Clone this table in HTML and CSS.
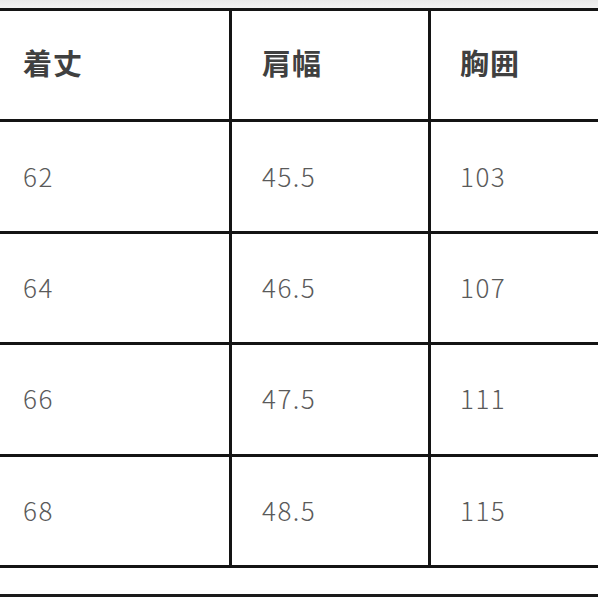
FILE: index.html
```html
<!DOCTYPE html>
<html lang="ja">
<head>
<meta charset="utf-8">
<title>サイズ表</title>
<link rel="stylesheet" href="styles.css">
</head>
<body>
<div class="top-band"></div>
<div class="size-table">
  <div class="row head">
    <div class="cell c1">着丈</div>
    <div class="cell c2">肩幅</div>
    <div class="cell c3">胸囲</div>
  </div>
  <div class="row">
    <div class="cell c1">62</div>
    <div class="cell c2">45.5</div>
    <div class="cell c3">103</div>
  </div>
  <div class="row">
    <div class="cell c1">64</div>
    <div class="cell c2">46.5</div>
    <div class="cell c3">107</div>
  </div>
  <div class="row">
    <div class="cell c1">66</div>
    <div class="cell c2">47.5</div>
    <div class="cell c3">111</div>
  </div>
  <div class="row">
    <div class="cell c1">68</div>
    <div class="cell c2">48.5</div>
    <div class="cell c3">115</div>
  </div>
</div>
<div class="gap"></div>
<div class="next-line"></div>
</body>
</html>
```
FILE: styles.css
```css
html, body {
  margin: 0;
  padding: 0;
  background: #ffffff;
  overflow: hidden;
}
body {
  width: 598px;
  height: 598px;
  font-family: "Noto Sans CJK JP", "Noto Sans", sans-serif;
}
.top-band {
  height: 8px;
  background: linear-gradient(#e9e9e9, #f3f3f3);
}
.size-table {
  border-top: 3px solid #141414;
}
.row {
  display: grid;
  grid-template-columns: 232px 199px 1fr;
  height: 111.4px;
  box-sizing: border-box;
  border-bottom: 3px solid #141414;
}
.cell {
  display: flex;
  align-items: center;
  font-size: 26px;
  color: #5a5a5a;
  font-weight: 300;
  letter-spacing: 1.5px;
  padding-bottom: 3px;
}
.c1 {
  padding-left: 23px;
  border-right: 3px solid #141414;
}
.c2 {
  padding-left: 30px;
  border-right: 3px solid #141414;
}
.c3 {
  padding-left: 29px;
}
.head .cell {
  font-weight: 700;
  color: #404040;
  font-size: 29px;
  letter-spacing: 1px;
  padding-bottom: 6px;
}
.gap {
  height: 26px;
}
.next-line {
  border-top: 3px solid #1a1a1a;
}
```
